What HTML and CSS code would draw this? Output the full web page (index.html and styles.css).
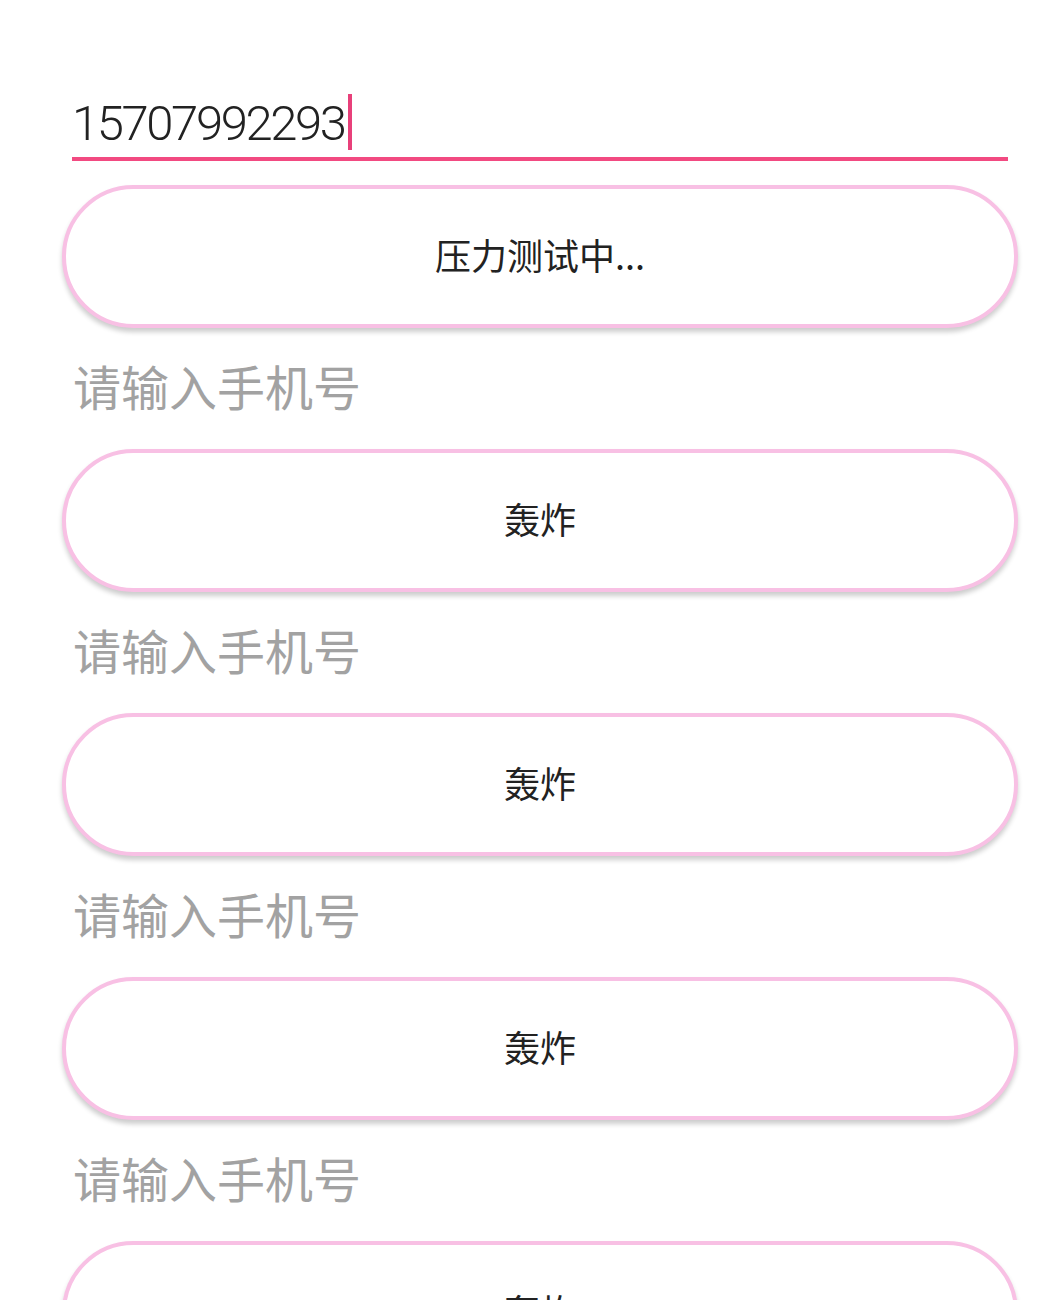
FILE: index.html
```html
<!DOCTYPE html>
<html lang="zh">
<head>
<meta charset="utf-8">
<link rel="stylesheet" href="styles.css">
</head>
<body>
<main class="page">
  <section class="group">
    <div class="field field-active"><span class="value">15707992293</span><span class="caret"></span></div>
    <button class="btn">压力测试中...</button>
  </section>
  <section class="group">
    <div class="field"><span class="placeholder">请输入手机号</span></div>
    <button class="btn">轰炸</button>
  </section>
  <section class="group">
    <div class="field"><span class="placeholder">请输入手机号</span></div>
    <button class="btn">轰炸</button>
  </section>
  <section class="group">
    <div class="field"><span class="placeholder">请输入手机号</span></div>
    <button class="btn">轰炸</button>
  </section>
  <section class="group">
    <div class="field"><span class="placeholder">请输入手机号</span></div>
    <button class="btn">轰炸</button>
  </section>
</main>
</body>
</html>
```
FILE: styles.css
```css
html, body {
  margin: 0;
  padding: 0;
  background: #ffffff;
}
body {
  width: 1041px;
  height: 1300px;
  overflow: hidden;
  font-family: "Noto Sans CJK SC", "Liberation Sans", sans-serif;
}
.page {
  padding: 96px 0 0 62px;
  width: 956px;
  display: flex;
  flex-direction: column;
  gap: 32px;
}
.group {
  display: flex;
  flex-direction: column;
  gap: 24px;
}
.field {
  margin: 0 10px;
  height: 61px;
  border-bottom: 4px solid transparent;
  display: flex;
  align-items: flex-start;
}
.field-active {
  border-bottom-color: #f24a81;
}
.value {
  font-family: Roboto, "Liberation Sans", sans-serif;
  font-weight: 300;
  font-size: 49px;
  line-height: 55px;
  letter-spacing: -2.4px;
  color: #222222;
}
.caret {
  display: inline-block;
  width: 4px;
  height: 56px;
  margin-top: -2px;
  margin-left: 3px;
  background: #e8407a;
}
.placeholder {
  font-family: "Noto Sans CJK SC", sans-serif;
  font-size: 48px;
  line-height: 50px;
  color: #a2a2a2;
  margin-left: 1px;
}
.btn {
  height: 143px;
  width: 956px;
  box-sizing: border-box;
  border: 4px solid #f8c0e4;
  border-radius: 72px;
  background: #ffffff;
  box-shadow: 0 4px 5px rgba(0, 0, 0, 0.2);
  font-family: "Noto Sans CJK SC", sans-serif;
  font-size: 36px;
  color: #222222;
  padding: 0 0 6px 0;
  text-align: center;
}
```
